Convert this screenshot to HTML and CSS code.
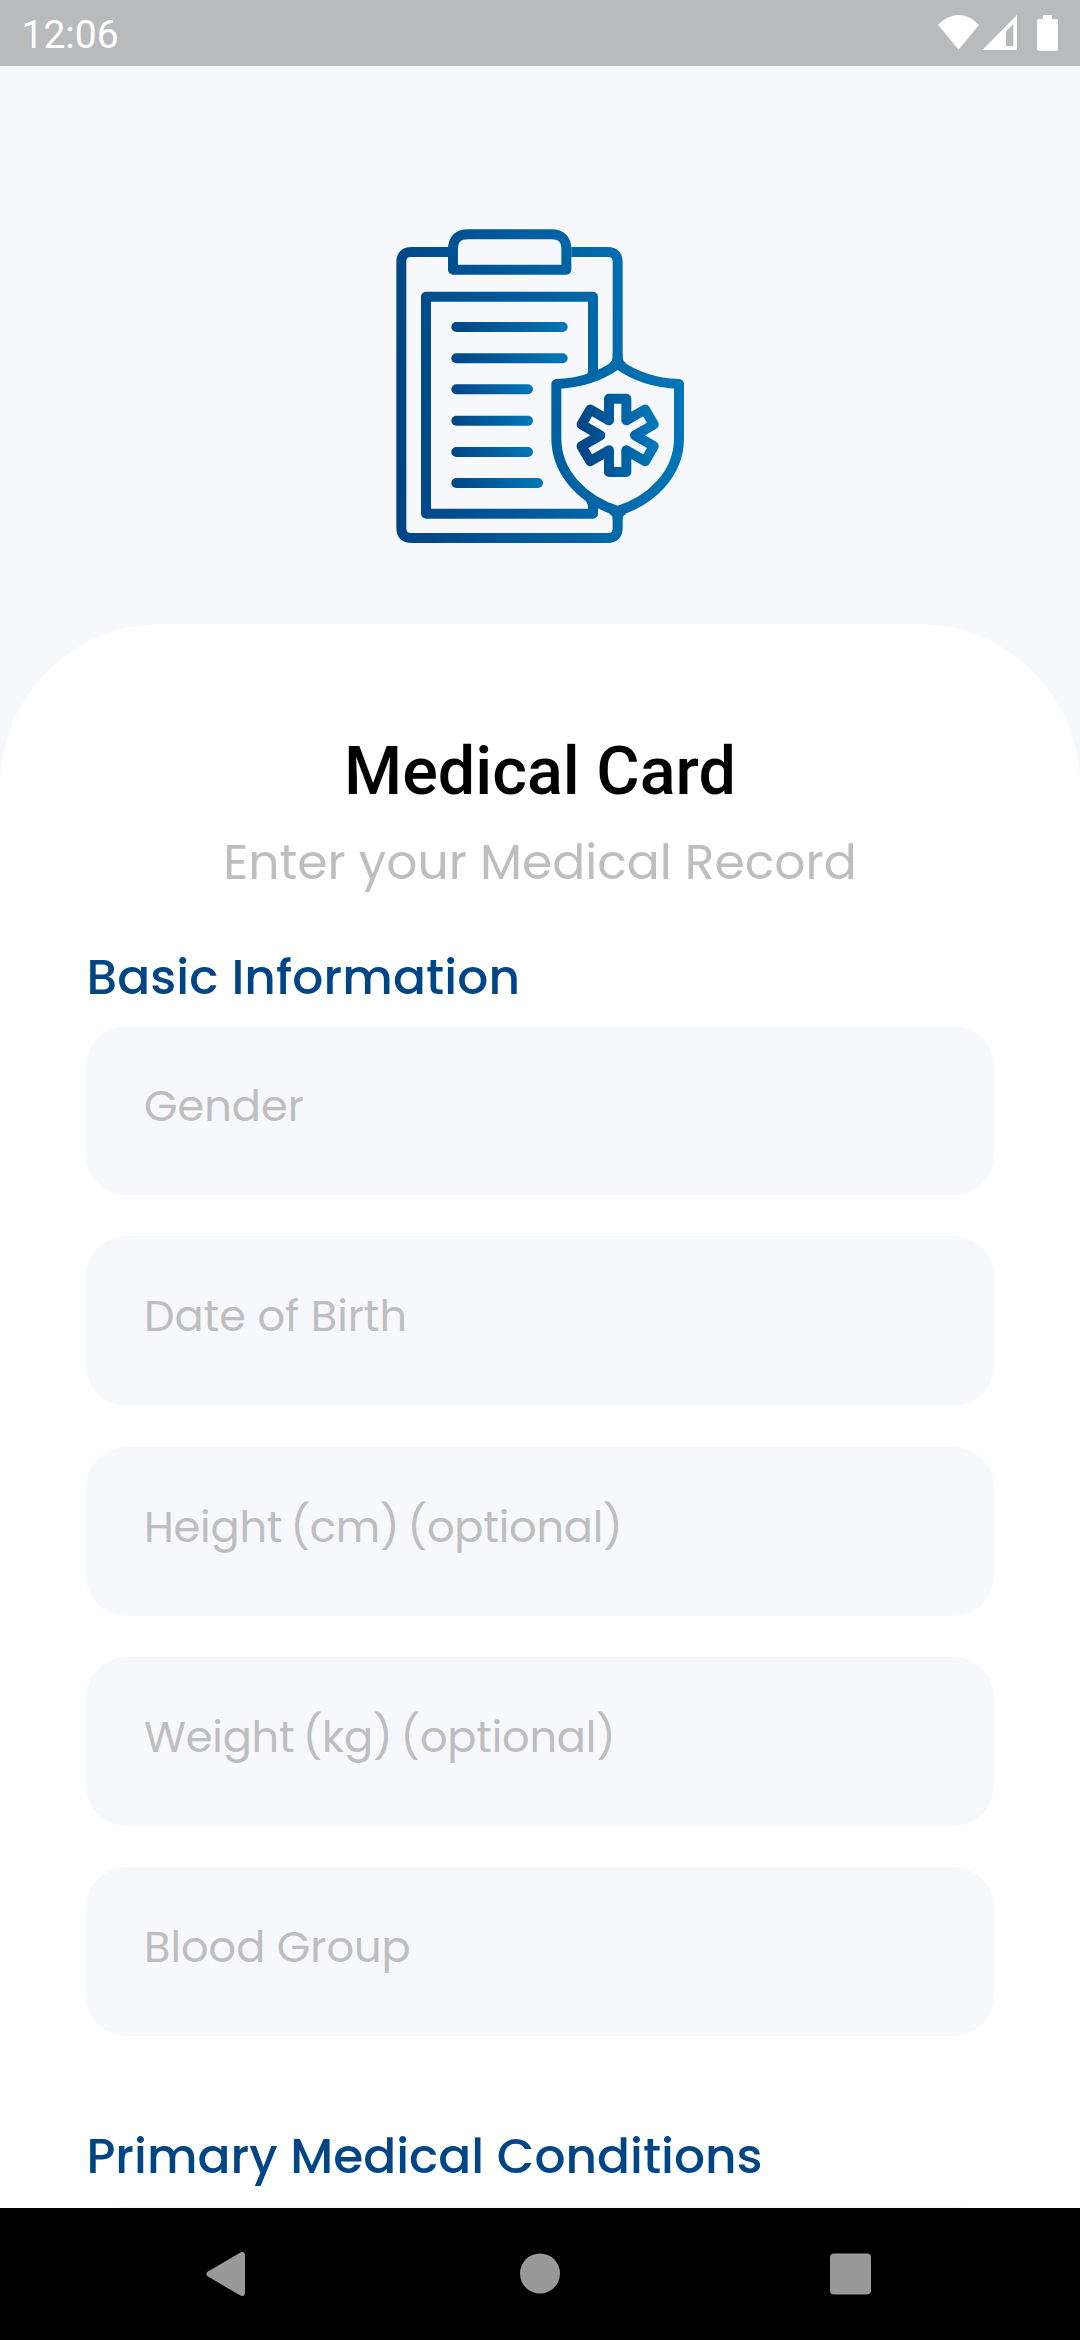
FILE: index.html
```html
<!DOCTYPE html>
<html lang="en">
<head>
<meta charset="utf-8">
<title>Medical Card</title>
<link rel="stylesheet" href="styles.css">
</head>
<body>
<div class="screen">
  <header class="status-bar">
    <span class="clock">12:06</span>
    <svg class="status-icons" viewBox="0 0 540 198" fill="#fff">
      <path d="M176 149 114 74Q143 45 176 45T237 74Z"/>
      <path fill-rule="evenodd" d="M247 150 351 45V150ZM318 94V138H340V72Z"/>
      <path d="M429 45H456V57H468Q474 57 474 63V146Q474 152 468 152H417Q411 152 411 146V63Q411 57 417 57H429Z"/>
    </svg>
  </header>

  <main class="content">
    <div class="hero">
      <svg class="hero-icon" viewBox="0 0 960 1050">
        <defs>
          <linearGradient id="main" gradientUnits="userSpaceOnUse" x1="49" y1="560" x2="912" y2="490">
            <stop offset="0" stop-color="#004585"/><stop offset="1" stop-color="#0077b8"/>
          </linearGradient>
          <linearGradient id="part" x1="0" y1="0.5" x2="1" y2="0.45">
            <stop offset="0" stop-color="#004585"/><stop offset="1" stop-color="#0077b8"/>
          </linearGradient>
        </defs>
        <g fill="none" stroke="url(#main)" stroke-width="30" stroke-linejoin="round">
          <path d="M204 126H94Q64 126 64 156V954Q64 984 94 984H683Q713 984 713 954V902"/>
          <path d="M574 126H683Q713 126 713 156V465"/>
          <path d="M219 179V118Q219 73 264 73H514Q559 73 559 118V179Z"/>
          <path d="M639 500V260H138V911H639V876"/>
          <path d="M713 462Q790 518 897 522V685C897 790 815 872 713 903C611 872 529 790 529 685V522Q636 518 713 462Z"/>
        </g>
        <g fill="url(#main)">
          <path d="M698 430V444Q698 452 688 459L713 470 738 459Q728 452 728 444V430Z"/>
          <path d="M698 930V924Q698 916 686 911L713 900 740 911Q728 916 728 924V930Z"/>
          <path d="M624 470V484Q624 493 612 495L640 500V470Z"/>
          <path d="M624 898V888Q624 880 616 873L640 880V898Z"/>
        </g>
        <g fill="url(#part)">
          <rect x="214" y="336" width="349" height="30" rx="15"/>
          <rect x="214" y="430" width="349" height="30" rx="15"/>
          <rect x="214" y="523" width="245" height="30" rx="15"/>
          <rect x="214" y="617" width="245" height="30" rx="15"/>
          <rect x="214" y="711" width="245" height="30" rx="15"/>
          <rect x="214" y="804" width="275" height="30" rx="15"/>
        </g>
        <path fill="none" stroke="url(#part)" stroke-width="30" stroke-linejoin="round" d="M687 566H739V631L795.3 598.5 821.3 643.5 765 676 821.3 708.5 795.3 753.5 739 721V786H687V721L630.7 753.5 604.7 708.5 661 676 604.7 643.5 630.7 598.5 687 631Z"/>
      </svg>
    </div>

    <section class="panel">
      <h1 class="title">Medical Card</h1>
      <p class="subtitle">Enter your Medical Record</p>

      <h2 class="section-title section-basic">Basic Information</h2>
      <div class="fields">
        <div class="field">Gender</div>
        <div class="field">Date of Birth</div>
        <div class="field field-unit">Height (cm) (optional)</div>
        <div class="field field-unit">Weight (kg) (optional)</div>
        <div class="field">Blood Group</div>
      </div>

      <h2 class="section-title section-primary">Primary Medical Conditions</h2>
      <div class="fields">
        <div class="field"></div>
      </div>
    </section>
  </main>

  <nav class="nav-bar">
    <svg class="nav-icon" viewBox="0 0 44 46"><path fill="#999" stroke="#999" stroke-width="6" stroke-linejoin="round" d="M3.500 23 36 4V42Z"/></svg>
    <svg class="nav-icon" viewBox="0 0 44 46"><circle cx="22" cy="22.500" r="20" fill="#999"/></svg>
    <svg class="nav-icon" viewBox="0 0 44 46"><rect x="0" y="2.500" width="41" height="41" rx="4" fill="#999"/></svg>
  </nav>
</div>
</body>
</html>
```
FILE: styles.css
```css
* {
  box-sizing: border-box;
}

body {
  margin: 0;
  background: #f7f8fc;
}

.screen {
  display: flex;
  flex-direction: column;
  width: 1080px;
  height: 2340px;
  overflow: hidden;
}

.status-bar {
  display: flex;
  flex: none;
  justify-content: space-between;
  height: 66px;
  padding-left: 21.5px;
  background: #b9babc;
}

.clock {
  color: #fff;
  font: 39px/70px Roboto, sans-serif;
}

.status-icons {
  width: 180px;
  height: 66px;
}

.content {
  display: flex;
  flex: 1;
  flex-direction: column;
  min-height: 0;
  overflow: hidden;
}

.hero {
  display: flex;
  flex: none;
  justify-content: center;
  height: 558px;
  padding-top: 144px;
}

.hero-icon {
  width: 320px;
  height: 350px;
}

.panel {
  flex: none;
  padding: 107px 86.4px 0;
  border-radius: 162px 162px 0 0;
  background: #fff;
}

.title,
.subtitle,
.section-title {
  margin: 0;
  white-space: nowrap;
}

.title {
  color: #000;
  font: 500 66.5px/80px Roboto, sans-serif;
  text-align: center;
}

.subtitle {
  margin-top: 16px;
  color: #bebebe;
  font: 400 48.8px/70px Poppins, Inter, sans-serif;
  text-align: center;
}

.section-title {
  color: #004585;
  font: 500 48.7px/70px Poppins, Inter, sans-serif;
}

.section-basic {
  margin: 45px 0 14.3px;
  letter-spacing: 0.1px;
}

.section-primary {
  margin: 85px 0 14.3px;
}

.fields {
  display: flex;
  flex-direction: column;
  gap: 41px;
}

.field {
  height: 169.2px;
  padding: 0 57.6px;
  border-radius: 40px;
  background: #f7f8fc;
  color: #bebebe;
  font: 400 43.1px/161px Poppins, Inter, sans-serif;
  white-space: nowrap;
}

.field-unit {
  letter-spacing: -0.22px;
  word-spacing: -3px;
}

.nav-bar {
  display: flex;
  flex: none;
  justify-content: space-between;
  height: 132px;
  padding: 43px 206px 0;
  background: #000;
}

.nav-icon {
  width: 44px;
  height: 46px;
}
```
